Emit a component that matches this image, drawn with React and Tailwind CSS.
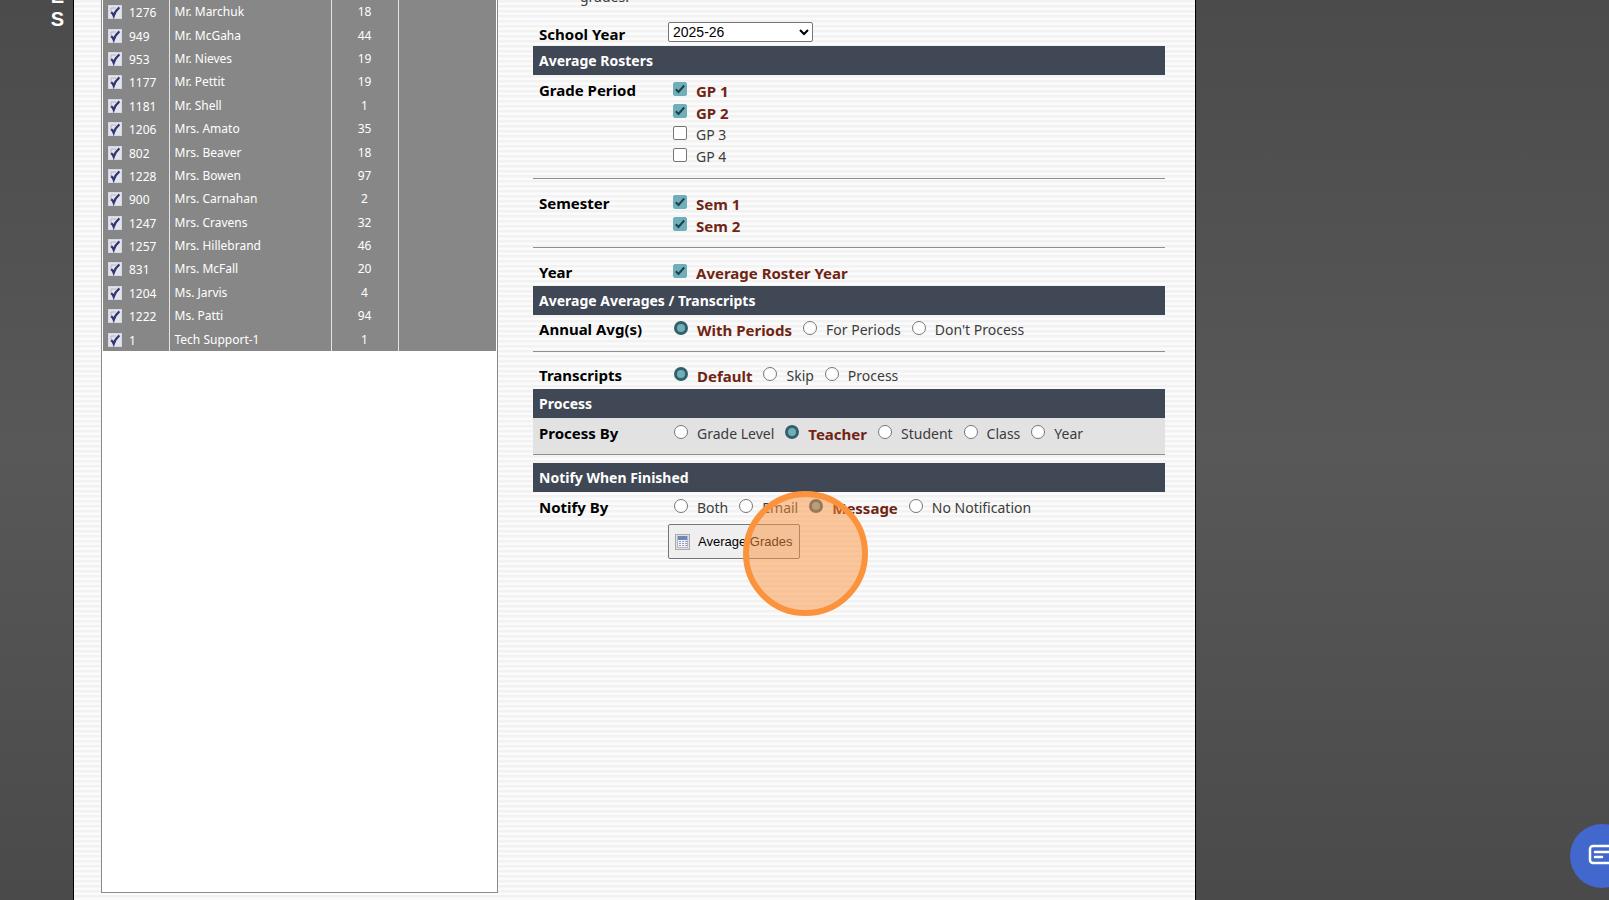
import React, { useState } from 'react'

const TEACHERS = [
  { id: 1276, name: 'Mr. Marchuk', count: 18 },
  { id: 949, name: 'Mr. McGaha', count: 44 },
  { id: 953, name: 'Mr. Nieves', count: 19 },
  { id: 1177, name: 'Mr. Pettit', count: 19 },
  { id: 1181, name: 'Mr. Shell', count: 1 },
  { id: 1206, name: 'Mrs. Amato', count: 35 },
  { id: 802, name: 'Mrs. Beaver', count: 18 },
  { id: 1228, name: 'Mrs. Bowen', count: 97 },
  { id: 900, name: 'Mrs. Carnahan', count: 2 },
  { id: 1247, name: 'Mrs. Cravens', count: 32 },
  { id: 1257, name: 'Mrs. Hillebrand', count: 46 },
  { id: 831, name: 'Mrs. McFall', count: 20 },
  { id: 1204, name: 'Ms. Jarvis', count: 4 },
  { id: 1222, name: 'Ms. Patti', count: 94 },
  { id: 1, name: 'Tech Support-1', count: 1 },
]

function TeacherRow({ t }) {
  const [on, setOn] = useState(true)
  return (
    <tr>
      <td className="w-[66px] border-r border-[#e4e4e4] p-0 pt-px">
        <label className="flex items-center gap-[7px] pl-[5px]">
          <span className="grid size-[14px]">
            <input type="checkbox" checked={on} onChange={(e) => setOn(e.target.checked)} className="[grid-area:1/1] size-[14px] appearance-none border border-[#d4d8e4] bg-[#e3e4ee]" />
            {on && (
              <svg viewBox="0 0 14 14" className="pointer-events-none [grid-area:1/1] size-[14px]" fill="none">
                <path d="M3 3h5M3 3v6" stroke="#b5b5bd" strokeWidth="1" />
                <path d="M3.2 7.2c1 .6 1.900 1.900 2.500 3.600C6.600 8 8.400 4.800 11.400 2.300" stroke="#33356f" strokeWidth="2.200" />
              </svg>
            )}
          </span>
          <span className="pt-[2px]">{t.id}</span>
        </label>
      </td>
      <td className="w-[162px] border-r border-[#e4e4e4] p-0 pt-px pl-[5px]">{t.name}</td>
      <td className="w-[67px] border-r border-[#e4e4e4] p-0 pt-px text-center">{t.count}</td>
      <td className="p-0" />
    </tr>
  )
}

function Bar({ children }) {
  return <h2 className="h-[29px] bg-[#414855] px-[6px] text-[14px] leading-[29px] font-bold text-white">{children}</h2>
}

function Row({ label, className = '', children }) {
  return (
    <div className={`flex pl-[6px] ${className}`}>
      <div className="w-[134px] shrink-0 text-[15px] leading-[22px] font-bold text-black">{label}</div>
      <div className="min-w-0 flex-1">{children}</div>
    </div>
  )
}

function Check({ label, initial = false }) {
  const [on, setOn] = useState(initial)
  return (
    <label className={`flex h-[22px] gap-[9px] leading-[24px] ${on ? 'text-[15px] font-bold text-[#702413]' : 'text-[14px] text-[#3c3c3c]'}`}>
      <span className="mt-[3px] grid size-[14px]">
        <input type="checkbox" checked={on} onChange={(e) => setOn(e.target.checked)} className="[grid-area:1/1] size-[14px] appearance-none rounded-[2px] border border-[#767676] bg-white checked:border-[#6fafba] checked:bg-[#6fafba]" />
        {on && (
          <svg viewBox="0 0 14 14" className="pointer-events-none [grid-area:1/1] size-[14px]" fill="none">
            <path d="M2.800 7.300l2.700 2.700L11.200 3.500" stroke="#243d4a" strokeWidth="2" />
          </svg>
        )}
      </span>
      {label}
    </label>
  )
}

function Radios({ name, options, initial }) {
  const [value, setValue] = useState(initial)
  return (
    <div className="flex gap-[11px] pl-px leading-[24px]">
      {options.map((o) => (
        <label key={o} className={`flex gap-[9px] whitespace-nowrap ${o === value ? 'text-[15px] font-bold text-[#702413]' : 'text-[14px] text-[#3c3c3c]'}`}>
          <input type="radio" name={name} checked={o === value} onChange={() => setValue(o)} className="mt-[3px] size-[14px] appearance-none rounded-full border border-[#767676] bg-white checked:border-[3px] checked:border-[#34606c] checked:bg-[#6fafba]" />
          {o}
        </label>
      ))}
    </div>
  )
}

function CalculatorIcon() {
  return (
    <svg viewBox="0 0 15 16" className="h-4 w-[15px]">
      <rect x=".5" y=".5" width="14" height="15" fill="#e0e0e2" stroke="#a9a9ad" />
      <rect x="2.500" y="2.500" width="10" height="11" fill="#f4f4f6" stroke="#b4b8c6" />
      <rect x="3" y="2" width="9" height="4" fill="#6f86bd" />
      {[7, 9, 11].map((y) => [4, 7, 10].map((x) => <rect key={`${x}-${y}`} x={x} y={y} width="2" height="1" fill="#8f9bbd" />))}
    </svg>
  )
}

export default function App() {
  return (
    <div className="flex min-h-screen overflow-hidden bg-linear-to-b from-[#4b4b4c] via-[#585858] to-[#4a4a4a] font-['Noto_Sans','Open_Sans',sans-serif]">
      <aside className="w-[73px] shrink-0">
        <div className="-mt-[15px] flex flex-col items-end pr-[9px] font-['Liberation_Sans',sans-serif] text-[20px] leading-[23px] font-bold text-white">
          <span>E</span>
          <span>S</span>
        </div>
      </aside>

      <main className="flex w-[69.8%] shrink-0 gap-[35px] border-x border-black bg-[repeating-linear-gradient(to_bottom,#f2f2f2_0px,#f2f2f2_2px,#fbfbfb_3px,#fbfbfb_5px)] pr-[30px] pb-[7px] pl-[27px]">
        <div className="w-[397px] shrink-0 border border-t-0 border-[#8a8a8a] bg-white px-px">
          <table className="h-[351px] w-full table-fixed border-collapse bg-[#878787] text-[12px] leading-[18px] text-white">
            <tbody>
              {TEACHERS.map((t) => <TeacherRow key={t.id} t={t} />)}
            </tbody>
          </table>
        </div>

        <form className="min-w-0 flex-1" onSubmit={(e) => e.preventDefault()}>
          <p className="-mt-[14px] pl-[47px] text-[14px] leading-[22px] text-[#3c3c3c]">grades.</p>
          <div className="flex h-[38px] items-end pb-px pl-[6px]">
            <label htmlFor="year" className="w-[129px] text-[15px] leading-[22px] font-bold text-black">School Year</label>
            <select id="year" className="mb-[3px] h-5 w-[145px] rounded-[2px] border border-[#767676] bg-white font-['Liberation_Sans',sans-serif] text-[14px] leading-[18px] text-black">
              <option>2025-26</option>
            </select>
          </div>

          <Bar>Average Rosters</Bar>
          <Row label="Grade Period" className="pt-[4px]">
            <Check label="GP 1" initial />
            <Check label="GP 2" initial />
            <Check label="GP 3" />
            <Check label="GP 4" />
          </Row>
          <hr className="mt-[11px] border-[#8f8f8f]" />
          <Row label="Semester" className="pt-[13px]">
            <Check label="Sem 1" initial />
            <Check label="Sem 2" initial />
          </Row>
          <hr className="mt-[11px] border-[#8f8f8f]" />
          <Row label="Year" className="pt-[13px]">
            <Check label="Average Roster Year" initial />
          </Row>

          <div className="mt-[3px]"><Bar>Average Averages / Transcripts</Bar></div>
          <Row label="Annual Avg(s)" className="h-[36px] pt-[3px]">
            <Radios name="annual" initial="With Periods" options={['With Periods', 'For Periods', "Don't Process"]} />
          </Row>
          <hr className="border-[#8f8f8f]" />
          <Row label="Transcripts" className="h-[37px] pt-[12px]">
            <Radios name="transcripts" initial="Default" options={['Default', 'Skip', 'Process']} />
          </Row>

          <Bar>Process</Bar>
          <Row label="Process By" className="h-[36px] bg-[#e2e2e2] pt-[4px]">
            <Radios name="process" initial="Teacher" options={['Grade Level', 'Teacher', 'Student', 'Class', 'Year']} />
          </Row>
          <hr className="mb-2 border-[#8f8f8f]" />

          <Bar>Notify When Finished</Bar>
          <Row label="Notify By" className="h-[32px] pt-[4px]">
            <Radios name="notify" initial="Message" options={['Both', 'Email', 'Message', 'No Notification']} />
          </Row>
          <div className="relative ml-[135px] w-fit">
            <button type="submit" className="flex h-[35px] w-[132px] items-center gap-2 rounded-[2px] border border-[#767676] bg-[#efefef] pl-[6px] font-['Liberation_Sans',sans-serif] text-[13px] whitespace-nowrap text-black">
              <CalculatorIcon />
              Average Grades
            </button>
            {/* click highlight */}
            <div className="pointer-events-none absolute -top-[33px] left-[75px] size-[125px] rounded-full border-[6px] border-[#fb923c] bg-[#fb923c]/50" />
          </div>
        </form>
      </main>

      <button type="button" aria-label="Open chat" className="fixed -right-[25px] bottom-3 flex size-16 items-center justify-center rounded-full bg-[#4267cd]">
        <svg viewBox="0 0 28 24" className="h-6 w-7" fill="none" stroke="#fff" strokeWidth="2.500" strokeLinecap="round" strokeLinejoin="round">
          <path d="M5 2h18a3 3 0 0 1 3 3v17l-4-3H5a3 3 0 0 1-3-3V5a3 3 0 0 1 3-3z" />
          <path d="M7 8h14M7 13h7" />
        </svg>
      </button>
    </div>
  )
}
